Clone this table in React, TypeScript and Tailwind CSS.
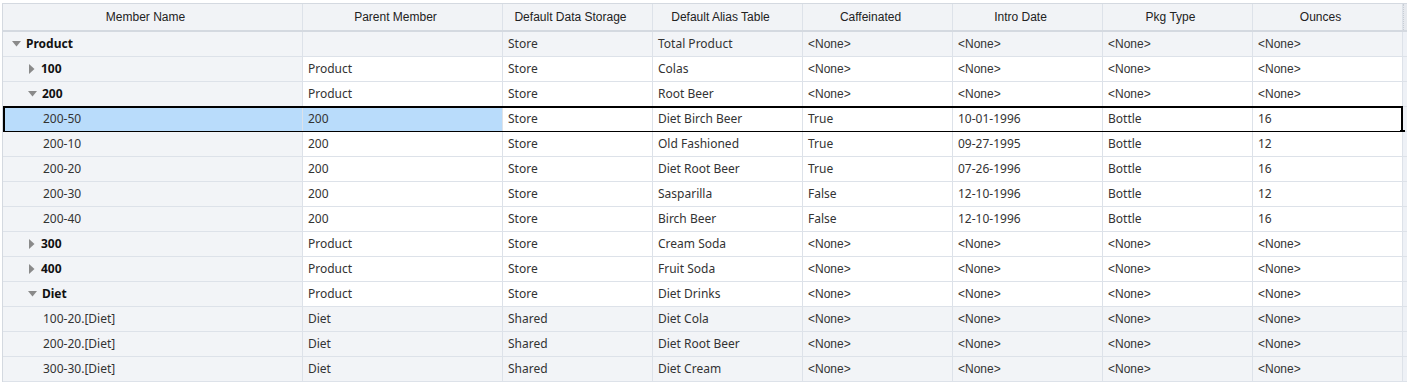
type Row = {
  name: string;
  level: number;
  toggle?: "open" | "closed";
  parent: string;
  storage: string;
  alias: string;
  caff: string;
  date: string;
  pkg: string;
  oz: string;
  shaded?: boolean;
  selected?: boolean;
};

const N = "<None>";

const rows: Row[] = [
  { name: "Product", level: 0, toggle: "open", parent: "", storage: "Store", alias: "Total Product", caff: N, date: N, pkg: N, oz: N, shaded: true },
  { name: "100", level: 1, toggle: "closed", parent: "Product", storage: "Store", alias: "Colas", caff: N, date: N, pkg: N, oz: N },
  { name: "200", level: 1, toggle: "open", parent: "Product", storage: "Store", alias: "Root Beer", caff: N, date: N, pkg: N, oz: N },
  { name: "200-50", level: 2, parent: "200", storage: "Store", alias: "Diet Birch Beer", caff: "True", date: "10-01-1996", pkg: "Bottle", oz: "16", selected: true },
  { name: "200-10", level: 2, parent: "200", storage: "Store", alias: "Old Fashioned", caff: "True", date: "09-27-1995", pkg: "Bottle", oz: "12" },
  { name: "200-20", level: 2, parent: "200", storage: "Store", alias: "Diet Root Beer", caff: "True", date: "07-26-1996", pkg: "Bottle", oz: "16" },
  { name: "200-30", level: 2, parent: "200", storage: "Store", alias: "Sasparilla", caff: "False", date: "12-10-1996", pkg: "Bottle", oz: "12" },
  { name: "200-40", level: 2, parent: "200", storage: "Store", alias: "Birch Beer", caff: "False", date: "12-10-1996", pkg: "Bottle", oz: "16" },
  { name: "300", level: 1, toggle: "closed", parent: "Product", storage: "Store", alias: "Cream Soda", caff: N, date: N, pkg: N, oz: N },
  { name: "400", level: 1, toggle: "closed", parent: "Product", storage: "Store", alias: "Fruit Soda", caff: N, date: N, pkg: N, oz: N },
  { name: "Diet", level: 1, toggle: "open", parent: "Product", storage: "Store", alias: "Diet Drinks", caff: N, date: N, pkg: N, oz: N },
  { name: "100-20.[Diet]", level: 2, parent: "Diet", storage: "Shared", alias: "Diet Cola", caff: N, date: N, pkg: N, oz: N, shaded: true },
  { name: "200-20.[Diet]", level: 2, parent: "Diet", storage: "Shared", alias: "Diet Root Beer", caff: N, date: N, pkg: N, oz: N, shaded: true },
  { name: "300-30.[Diet]", level: 2, parent: "Diet", storage: "Shared", alias: "Diet Cream", caff: N, date: N, pkg: N, oz: N, shaded: true },
];

const headers = [
  { label: "Member Name", w: "w-[300px]" },
  { label: "Parent Member", w: "w-[200px]" },
  { label: "Default Data Storage", w: "w-[150px]" },
  { label: "Default Alias Table", w: "w-[150px]" },
  { label: "Caffeinated", w: "w-[150px]" },
  { label: "Intro Date", w: "w-[150px]" },
  { label: "Pkg Type", w: "w-[150px]" },
  { label: "Ounces", w: "w-[150px]" },
];

const Caret = ({ open }: { open: boolean }) =>
  open ? (
    <svg width="9" height="6" viewBox="0 0 9 6" className="mr-[5px] shrink-0">
      <path d="M0 0 L9 0 L4.5 5.5 Z" fill="#8a8a8a" />
    </svg>
  ) : (
    <svg width="6" height="10" viewBox="0 0 6 10" className="mr-[6px] ml-[1px] shrink-0">
      <path d="M0 0 L5.5 5 L0 10 Z" fill="#8a8a8a" />
    </svg>
  );

const Cell = ({ w, bg, children }: { w: string; bg: string; children?: React.ReactNode }) => (
  <div className={`${w} ${bg} h-full shrink-0 border-r border-[#dde2e9] flex items-center pl-[5px] truncate`}>
    {children}
  </div>
);

const App = () => {
  return (
    <div className="w-[1407px] h-[385px] bg-white overflow-hidden pl-[2px] pt-[3px] text-[#333333]">
      <div className="w-[1405px] border-l border-t border-[#d4d9e0]">
        {/* header */}
        <div className="flex h-[28px] bg-[#f1f3f6] border-b-2 border-[#d4d9e0] font-['Liberation_Sans',Arial,sans-serif] text-[12px] text-[#222]">
          {headers.map((h) => (
            <div key={h.label} className={`${h.w} shrink-0 flex items-center justify-center pr-[14px] border-r border-[#dde2e9]`}>
              {h.label}
            </div>
          ))}
          <div className="w-[4px] bg-[#e6e9ee] border-l border-dotted border-[#c8cdd4]" />
        </div>

        {/* body */}
        <div className="font-['Noto_Sans','Segoe_UI',sans-serif] text-[12px]">
          {rows.map((r) => {
            const cellBg = r.shaded ? "bg-[#f2f4f7]" : "bg-white";
            const firstBg = r.selected ? "bg-[#b9dcfb]" : "bg-[#f2f4f7]";
            const parentBg = r.selected ? "bg-[#b9dcfb]" : cellBg;
            const padLeft =
              r.level === 0 ? "pl-[9px]" : r.level === 1 ? "pl-[25px]" : "pl-[40px]";
            const valueFont = (v: string) =>
              v === N ? "font-['Liberation_Sans',Arial,sans-serif] text-[12px]" : "";
            return (
              <div key={r.name} className="relative flex h-[25px] border-b border-[#dde2e9]">
                <div
                  className={`w-[300px] ${firstBg} h-full shrink-0 border-r border-[#dde2e9] flex items-center ${padLeft} ${
                    r.toggle ? "font-bold text-[#111]" : ""
                  }`}
                >
                  {r.toggle && <Caret open={r.toggle === "open"} />}
                  {r.name}
                </div>
                <Cell w="w-[200px]" bg={parentBg}>{r.parent}</Cell>
                <Cell w="w-[150px]" bg={cellBg}>{r.storage}</Cell>
                <Cell w="w-[150px]" bg={cellBg}>{r.alias}</Cell>
                {[r.caff, r.date, r.pkg, r.oz].map((v, i) => (
                  <Cell key={i} w="w-[150px]" bg={cellBg}>
                    <span className={valueFont(v)}>{v}</span>
                  </Cell>
                ))}
                <div className="w-[4px] h-full bg-[#eef1f6]" />
                {r.selected && (
                  <>
                    <div className="absolute left-0 w-[1400px] -top-[1px] -bottom-[2px] border-2 border-black pointer-events-none" />
                    <div className="absolute left-[1397px] -bottom-[4px] w-[5px] h-[5px] bg-black" />
                  </>
                )}
              </div>
            );
          })}
        </div>
      </div>
    </div>
  );
};

export default App;
